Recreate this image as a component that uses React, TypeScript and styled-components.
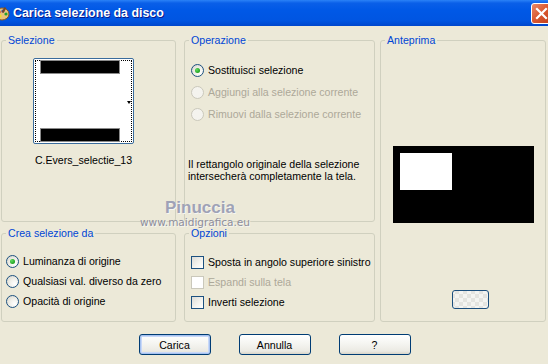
import React, { FC } from 'react';
import styled, { createGlobalStyle } from 'styled-components';

const GlobalStyle = createGlobalStyle`
  html, body {
    margin: 0;
    padding: 0;
  }
  body {
    background: #ece9d8;
    font-family: "Liberation Sans", Arial, sans-serif;
    font-size: 10.6px;
    color: #000;
  }
`;

const Window = styled.div`
  position: relative;
  width: 548px;
  height: 364px;
  overflow: hidden;
  background: #ece9d8;
`;

const TitleBar = styled.div`
  display: flex;
  align-items: center;
  height: 26px;
  background: linear-gradient(
    to bottom,
    #2b82f7 0%,
    #0a5fe8 12%,
    #0058e6 40%,
    #0055e1 80%,
    #0047cc 100%
  );
`;

const TitleIcon = styled.svg`
  width: 16px;
  height: 16px;
  margin-left: -6px;
  flex: none;
`;

const TitleText = styled.span`
  margin-left: 3px;
  color: #fff;
  font-family: "Liberation Sans", Arial, sans-serif;
  font-weight: 700;
  font-size: 12.4px;
  text-shadow: 1px 1px 0 #0a1a8a;
`;

const CloseButton = styled.div`
  display: flex;
  align-items: center;
  justify-content: center;
  margin-left: auto;
  margin-right: -4px;
  width: 21px;
  height: 21px;
  box-sizing: border-box;
  border: 1px solid #fff;
  border-radius: 3px;
  background: linear-gradient(135deg, #e9896a 0%, #d9572f 50%, #c2401a 100%);
`;

const Body = styled.div`
  padding: 8px 0 0 1px;
`;

const Panels = styled.div`
  display: grid;
  grid-template-columns: 175px 191px 163px;
  grid-template-rows: 188px 95px;
  column-gap: 8px;
  row-gap: 5px;
`;

const Group = styled.fieldset<{ $col: number; $row: string; $shift?: number }>`
  grid-column: ${({ $col }) => $col};
  grid-row: ${({ $row }) => $row};
  margin: 0 0 0 ${({ $shift }) => $shift || 0}px;
  padding: 0;
  min-width: 0;
  border: 1px solid #d0d0bf;
  border-radius: 3px;
  display: flex;
  flex-direction: column;
`;

const Legend = styled.legend`
  margin-left: 4px;
  padding: 0 2px;
  color: #0046d5;
  font-size: 10.6px;
  line-height: 13px;
`;

const SelectionContent = styled.div`
  display: flex;
  flex-direction: column;
  align-items: center;
  padding: 11px 10px 0 0;
`;

const Thumb = styled.div`
  width: 101px;
  height: 86px;
  box-sizing: border-box;
  border: 1px solid #3a6c9c;
  border-radius: 2px;
  padding: 1px;
  background: #fff;
`;

const ThumbFocus = styled.div`
  display: flex;
  align-items: center;
  height: 100%;
  box-sizing: border-box;
  border: 1px dotted #000;
`;

const ThumbImage = styled.div`
  display: flex;
  flex-direction: column;
  justify-content: space-between;
  width: 78px;
  height: 80px;
  margin-left: 5px;
  background: #fff;
`;

const ThumbBar = styled.div`
  height: 12px;
  background: #000;
  box-shadow: 0 0 0 1px #8a8a8a;
`;

const ThumbArrow = styled.div`
  margin-left: 8px;
  margin-top: 2px;
  width: 0;
  height: 0;
  border-left: 2.5px solid transparent;
  border-right: 2.5px solid transparent;
  border-top: 3px solid #000;
`;

const FileName = styled.div`
  margin-top: 10px;
  line-height: 13px;
`;

const OptionList = styled.div<{ $top: number; $left: number }>`
  display: flex;
  flex-direction: column;
  padding: ${({ $top }) => $top}px 0 0 ${({ $left }) => $left}px;
`;

const OptionRow = styled.div<{ $h: number; $disabled?: boolean; $indent?: number }>`
  display: flex;
  align-items: center;
  gap: 4px;
  height: ${({ $h }) => $h}px;
  margin-left: ${({ $indent }) => $indent || 0}px;
  color: ${({ $disabled }) => ($disabled ? '#aca899' : '#000')};
  white-space: nowrap;
`;

const Radio = styled.span<{ $checked?: boolean; $disabled?: boolean }>`
  display: flex;
  align-items: center;
  justify-content: center;
  width: 13px;
  height: 13px;
  box-sizing: border-box;
  border-radius: 50%;
  border: 1px solid ${({ $disabled }) => ($disabled ? '#cac8bb' : '#1c5180')};
  background: ${({ $disabled }) =>
    $disabled
      ? '#f4f3ee'
      : 'radial-gradient(circle at 70% 70%, #ffffff 0%, #f0efe9 45%, #d4d2c8 100%)'};
  &::after {
    content: '';
    display: ${({ $checked }) => ($checked ? 'block' : 'none')};
    width: 5px;
    height: 5px;
    border-radius: 50%;
    background: radial-gradient(circle at 35% 35%, #5fdc5f 0%, #21a121 70%);
  }
`;

const Check = styled.span<{ $disabled?: boolean }>`
  width: 13px;
  height: 13px;
  box-sizing: border-box;
  border: 1px solid ${({ $disabled }) => ($disabled ? '#cac8bb' : '#1c5180')};
  background: ${({ $disabled }) =>
    $disabled ? '#fff' : 'linear-gradient(135deg, #dcdcd7 0%, #f4f4f0 60%, #fff 100%)'};
`;

const Note = styled.p`
  margin: 33px 0 0 0;
  line-height: 12px;
`;

const PreviewContent = styled.div`
  display: flex;
  flex-direction: column;
  align-items: center;
  padding-top: 99px;
`;

const PreviewCanvas = styled.div`
  width: 141px;
  height: 77px;
  background: #000;
  padding: 7px 0 0 7px;
  box-sizing: border-box;
`;

const PreviewSelection = styled.div`
  width: 52px;
  height: 37px;
  background: #fff;
`;

const SmallButton = styled.div`
  margin: 67px 0 0 15px;
  width: 37px;
  height: 19px;
  box-sizing: border-box;
  border: 1px solid #1c4f7e;
  border-radius: 3px;
  background-color: #f4f4f1;
  background-image: linear-gradient(45deg, #e4e4e0 25%, transparent 25%, transparent 75%, #e4e4e0 75%),
    linear-gradient(45deg, #e4e4e0 25%, transparent 25%, transparent 75%, #e4e4e0 75%);
  background-size: 8px 8px;
  background-position: 10px 3px, 14px 7px;
`;

const ButtonRow = styled.div`
  display: flex;
  justify-content: center;
  gap: 28px;
  margin-top: 12px;
`;

const Button = styled.button<{ $default?: boolean }>`
  width: 72px;
  height: 21px;
  padding: 0;
  border: 1px solid #003c74;
  border-radius: 3px;
  background: linear-gradient(to bottom, #ffffff 0%, #f5f5f1 45%, #ebeae3 85%, #d8d4c8 100%);
  font-family: "Liberation Sans", Arial, sans-serif;
  font-size: 10.6px;
  color: #000;
  box-shadow: ${({ $default }) =>
    $default ? 'inset 0 0 0 1px #a7c2f0, inset 0 0 0 2px #c8d8f8' : 'none'};
`;

const Watermark = styled.div`
  position: absolute;
  left: 165px;
  top: 198px;
  font-family: "Liberation Sans", Arial, sans-serif;
  font-weight: 700;
  font-size: 17px;
  color: #9fa2b6;
  text-shadow: 1px 1px 0 #f6f6f2;
  pointer-events: none;
`;

const WatermarkUrl = styled.div`
  position: absolute;
  left: 140px;
  top: 216px;
  font-family: "DejaVu Sans", Verdana, sans-serif;
  font-size: 10.5px;
  line-height: 12px;
  color: #8d8e9c;
  text-shadow: 1px 1px 0 #f6f6f2;
  pointer-events: none;
`;

const App: FC = () => {
  return (
    <>
      <GlobalStyle />
      <Window>
        <TitleBar>
          <TitleIcon viewBox="0 0 16 16">
            <ellipse cx="8" cy="9" rx="7" ry="6" fill="#e8c27a" stroke="#8a5a20" strokeWidth="1" />
            <circle cx="5" cy="7" r="1.6" fill="#d92020" />
            <circle cx="9" cy="6" r="1.6" fill="#2050d0" />
            <circle cx="12" cy="9" r="1.6" fill="#20a030" />
            <circle cx="6" cy="11" r="1.6" fill="#f0e020" />
            <rect x="9" y="2" width="2" height="6" fill="#7a4a20" transform="rotate(30 10 5)" />
          </TitleIcon>
          <TitleText>Carica selezione da disco</TitleText>
          <CloseButton>
            <svg width="13" height="13" viewBox="0 0 13 13">
              <path d="M2 2 L11 11 M11 2 L2 11" stroke="#fff" strokeWidth="2.2" strokeLinecap="square" />
            </svg>
          </CloseButton>
        </TitleBar>
        <Body>
          <Panels>
            <Group $col={1} $row="1">
              <Legend>Selezione</Legend>
              <SelectionContent>
                <Thumb>
                  <ThumbFocus>
                    <ThumbImage>
                      <ThumbBar />
                      <ThumbBar />
                    </ThumbImage>
                    <ThumbArrow />
                  </ThumbFocus>
                </Thumb>
                <FileName>C.Evers_selectie_13</FileName>
              </SelectionContent>
            </Group>
            <Group $col={1} $row="2">
              <Legend>Crea selezione da</Legend>
              <OptionList $top={11} $left={4}>
                <OptionRow $h={20}>
                  <Radio $checked />
                  Luminanza di origine
                </OptionRow>
                <OptionRow $h={20}>
                  <Radio />
                  Qualsiasi val. diverso da zero
                </OptionRow>
                <OptionRow $h={20}>
                  <Radio />
                  Opacità di origine
                </OptionRow>
              </OptionList>
            </Group>
            <Group $col={2} $row="1">
              <Legend>Operazione</Legend>
              <OptionList $top={12} $left={3}>
                <OptionRow $h={22} $indent={3}>
                  <Radio $checked />
                  Sostituisci selezione
                </OptionRow>
                <OptionRow $h={22} $indent={3} $disabled>
                  <Radio $disabled />
                  Aggiungi alla selezione corrente
                </OptionRow>
                <OptionRow $h={22} $indent={3} $disabled>
                  <Radio $disabled />
                  Rimuovi dalla selezione corrente
                </OptionRow>
                <Note>
                  Il rettangolo originale della selezione
                  <br />
                  intersecherà completamente la tela.
                </Note>
              </OptionList>
            </Group>
            <Group $col={2} $row="2">
              <Legend>Opzioni</Legend>
              <OptionList $top={12} $left={6}>
                <OptionRow $h={20}>
                  <Check />
                  Sposta in angolo superiore sinistro
                </OptionRow>
                <OptionRow $h={20} $disabled>
                  <Check $disabled />
                  Espandi sulla tela
                </OptionRow>
                <OptionRow $h={20}>
                  <Check />
                  Inverti selezione
                </OptionRow>
              </OptionList>
            </Group>
            <Group $col={3} $row="1 / span 2" $shift={-3}>
              <Legend>Anteprima</Legend>
              <PreviewContent>
                <PreviewCanvas>
                  <PreviewSelection />
                </PreviewCanvas>
                <SmallButton />
              </PreviewContent>
            </Group>
          </Panels>
          <ButtonRow>
            <Button $default>Carica</Button>
            <Button>Annulla</Button>
            <Button>?</Button>
          </ButtonRow>
        </Body>
        <Watermark>Pinuccia</Watermark>
        <WatermarkUrl>www.maidigrafica.eu</WatermarkUrl>
      </Window>
    </>
  );
};

export default App;
